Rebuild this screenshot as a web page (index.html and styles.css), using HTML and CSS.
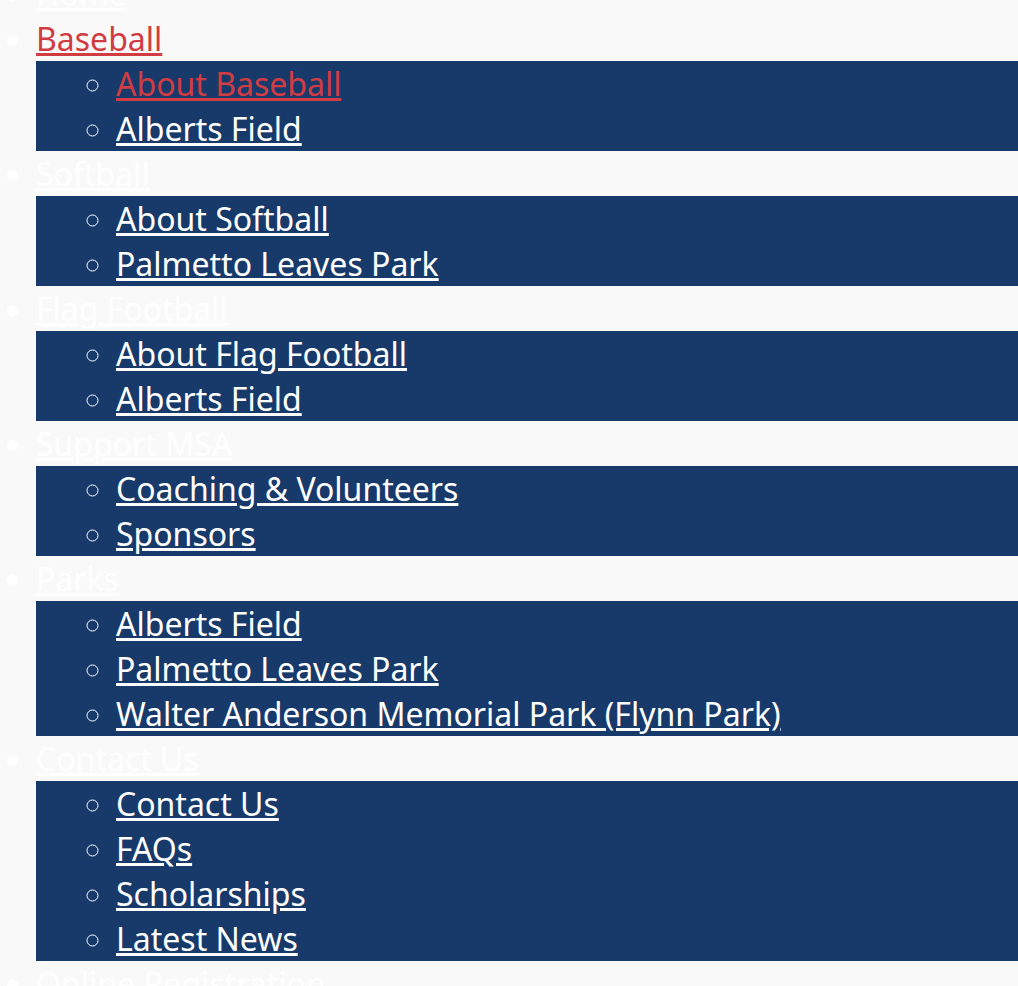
FILE: index.html
```html
<!DOCTYPE html>
<html lang="en">
<head>
  <meta charset="UTF-8">
  <meta name="viewport" content="width=device-width, initial-scale=1.0">
  <title>MSA Menu</title>
  <link rel="stylesheet" href="styles.css">
</head>
<body>
  <ul class="menu">
    <li><a href="#">Home</a></li>
    <li class="active"><a href="#">Baseball</a>
      <ul class="sub-menu">
        <li class="active"><a href="#">About Baseball</a></li>
        <li><a href="#">Alberts Field</a></li>
      </ul>
    </li>
    <li><a href="#">Softball</a>
      <ul class="sub-menu">
        <li><a href="#">About Softball</a></li>
        <li><a href="#">Palmetto Leaves Park</a></li>
      </ul>
    </li>
    <li><a href="#">Flag Football</a>
      <ul class="sub-menu">
        <li><a href="#">About Flag Football</a></li>
        <li><a href="#">Alberts Field</a></li>
      </ul>
    </li>
    <li><a href="#">Support MSA</a>
      <ul class="sub-menu">
        <li><a href="#">Coaching &amp; Volunteers</a></li>
        <li><a href="#">Sponsors</a></li>
      </ul>
    </li>
    <li><a href="#">Parks</a>
      <ul class="sub-menu">
        <li><a href="#">Alberts Field</a></li>
        <li><a href="#">Palmetto Leaves Park</a></li>
        <li><a href="#">Walter Anderson Memorial Park (Flynn Park)</a></li>
      </ul>
    </li>
    <li><a href="#">Contact Us</a>
      <ul class="sub-menu">
        <li><a href="#">Contact Us</a></li>
        <li><a href="#">FAQs</a></li>
        <li><a href="#">Scholarships</a></li>
        <li><a href="#">Latest News</a></li>
      </ul>
    </li>
    <li><a href="#">Online Registration</a></li>
  </ul>
</body>
</html>
```

FILE: styles.css
```css
* {
  box-sizing: border-box;
}
body {
  margin: 0;
  background: #f9f9f9;
  font-family: 'Noto Sans', sans-serif;
  font-size: 32px;
  line-height: 45px;
  color: #fff;
  overflow: hidden;
}
.menu {
  margin: -29px 0 0;
  padding-left: 36px;
  list-style: disc;
}
.menu a {
  color: #fff;
}
.menu .active > a {
  color: #d13c43;
}
.sub-menu {
  margin: 0;
  padding-left: 80px;
  list-style: circle;
  background: #183a6b;
}
```
